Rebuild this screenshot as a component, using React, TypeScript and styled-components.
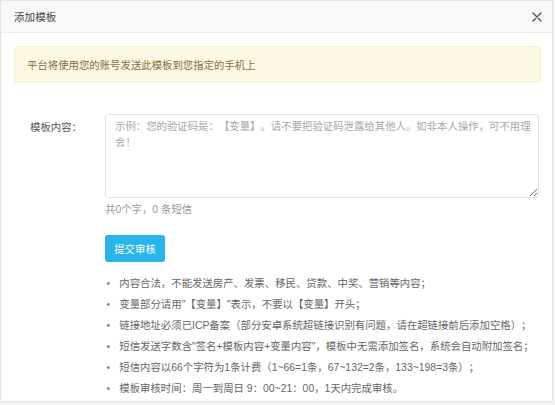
import styled, { createGlobalStyle } from 'styled-components';

const GlobalStyle = createGlobalStyle`
  html, body {
    margin: 0;
    background: #f3f3f3;
  }
  body {
    font-family: 'Liberation Sans', 'Noto Sans CJK SC', sans-serif;
    font-size: 10.4px;
    color: #555;
    text-spacing-trim: space-all;
  }
`;

const tips = [
  '内容合法，不能发送房产、发票、移民、贷款、中奖、营销等内容；',
  '变量部分请用"【变量】"表示，不要以【变量】开头；',
  '链接地址必须已ICP备案（部分安卓系统超链接识别有问题，请在超链接前后添加空格）；',
  '短信发送字数含"签名+模板内容+变量内容"，模板中无需添加签名，系统会自动附加签名；',
  '短信内容以66个字符为1条计费（1~66=1条，67~132=2条，133~198=3条）；',
  '模板审核时间：周一到周日 9：00~21：00，1天内完成审核。',
];

const App = () => {
  return (
    <>
      <GlobalStyle />
      <Modal>
        <Header>
          <Title>添加模板</Title>
          <CloseButton aria-label="关闭">
            <svg width="10" height="10" viewBox="0 0 10 10">
              <path d="M1 1 L9 9 M9 1 L1 9" stroke="#555" strokeWidth="1.4" strokeLinecap="round" />
            </svg>
          </CloseButton>
        </Header>
        <Body>
          <Alert>平台将使用您的账号发送此模板到您指定的手机上</Alert>
          <FormRow>
            <Label>模板内容：</Label>
            <Field>
              <TextArea placeholder="示例：您的验证码是：【变量】。请不要把验证码泄露给其他人。如非本人操作，可不用理会！" />
              <Counter>共0个字，0 条短信</Counter>
              <SubmitButton>提交审核</SubmitButton>
              <TipList>
                {tips.map(tip => (
                  <Tip key={tip}>{tip}</Tip>
                ))}
              </TipList>
            </Field>
          </FormRow>
        </Body>
      </Modal>
    </>
  );
};

export default App;

const Modal = styled.div`
  box-sizing: border-box;
  width: 553px;
  height: 402px;
  background: #fff;
  border: 1px solid #e4e4e4;
  display: flex;
  flex-direction: column;
  overflow: hidden;
`;

const Header = styled.div`
  box-sizing: border-box;
  height: 32px;
  flex-shrink: 0;
  display: flex;
  align-items: center;
  justify-content: space-between;
  padding: 0 10px 0 13px;
  background: #f8f8f8;
  border-bottom: 1px solid #ececec;
`;

const Title = styled.div`
  color: #444;
  font-size: 10.6px;
  line-height: 16px;
`;

const CloseButton = styled.button`
  border: 0;
  padding: 0;
  background: none;
  width: 10px;
  height: 10px;
  display: flex;
  cursor: pointer;
`;

const Body = styled.div`
  padding: 13px 11px 0 13px;
`;

const Alert = styled.div`
  box-sizing: border-box;
  height: 37px;
  display: flex;
  align-items: center;
  padding: 0 12px;
  background: #fcf8e4;
  border: 1px solid #f9efd2;
  border-radius: 3px;
  color: #8a6d3b;
  margin-bottom: 31px;
`;

const FormRow = styled.div`
  display: grid;
  grid-template-columns: 91px 1fr;
`;

const Label = styled.div`
  text-align: right;
  padding: 6px 23px 0 0;
  line-height: 16px;
  color: #555;
`;

const Field = styled.div`
  display: flex;
  flex-direction: column;
  align-items: flex-start;
`;

const TextArea = styled.textarea`
  box-sizing: border-box;
  width: 434px;
  height: 84px;
  margin: 0;
  padding: 4px 3px 4px 9px;
  border: 1px solid #e4e4e4;
  border-radius: 3px;
  font-family: inherit;
  font-size: 10.4px;
  line-height: 16px;
  color: #555;
  outline: none;
  text-spacing-trim: space-all;
  &::placeholder {
    color: #a8a8a8;
  }
`;

const Counter = styled.div`
  margin-top: 4px;
  line-height: 16px;
  color: #999;
`;

const SubmitButton = styled.button`
  margin-top: 17px;
  width: 60px;
  height: 27px;
  border: 0;
  border-radius: 3px;
  background: #28b5ea;
  color: #fff;
  font-family: inherit;
  font-size: 10.4px;
  padding: 0;
  cursor: pointer;
  text-spacing-trim: space-all;
`;

const TipList = styled.ul`
  list-style: none;
  margin: 12px 0 0;
  padding: 0;
  color: #666;
  line-height: 20.9px;
  white-space: nowrap;
`;

const Tip = styled.li`
  &::before {
    content: '•';
    display: inline-block;
    width: 12.8px;
    padding-left: 1.5px;
    color: #888;
  }
`;
